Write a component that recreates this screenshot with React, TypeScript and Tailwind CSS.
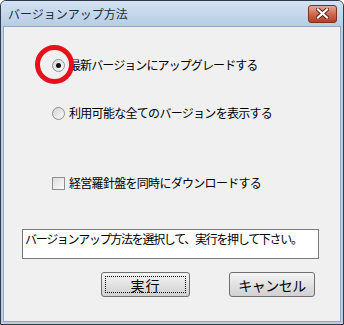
import React from 'react';

const JP = { fontFamily: "'Noto Sans CJK JP', 'Noto Sans', sans-serif" };

function Radio({ checked }: { checked?: boolean }) {
  return (
    <span className="w-[13px] h-[13px] rounded-full border border-[#8e8f8f] bg-gradient-to-br from-[#d4d4d4] to-[#fbfbfb] flex items-center justify-center shrink-0">
      {checked && <span className="w-[5px] h-[5px] rounded-full bg-[#111]" />}
    </span>
  );
}

export default function App() {
  return (
    <div
      className="w-[344px] h-[325px] flex flex-col border border-[#2f3b4a] rounded-t-[6px] bg-[#b9cfe6] overflow-hidden"
      style={JP}
    >
      {/* Title bar */}
      <div className="h-[25px] flex items-center justify-between pl-[7px] pr-[6px] bg-gradient-to-b from-[#d3e2f2] to-[#b7cde5]">
        <span className="text-[12px] leading-none text-[#1e2a3a]">
          バージョンアップ方法
        </span>
        <button className="w-[29px] h-[18px] rounded-[3px] border border-[#7a3222] bg-gradient-to-b from-[#e6a594] via-[#cf6a52] to-[#b83d22] flex items-center justify-center">
          <svg width="13" height="11" viewBox="0 0 13 11">
            <path d="M2 1.5 L11 9.5 M11 1.5 L2 9.5" stroke="#5a2015" strokeWidth="4" strokeLinecap="square" />
            <path d="M2 1.5 L11 9.5 M11 1.5 L2 9.5" stroke="#ffffff" strokeWidth="2.2" strokeLinecap="square" />
          </svg>
        </button>
      </div>

      {/* Client area */}
      <div className="flex-1 mx-[2px] mb-[2px] bg-[#f0f0f0] border border-[#94aac4] border-b-[#5fb8d6] flex flex-col text-[12px] leading-none text-black relative">
        <div className="flex flex-col pl-[48px] pt-[30px]">
          <label className="h-[16px] flex items-center gap-[4px] tracking-[-0.9px]">
            <Radio checked />
            <span>最新バージョンにアップグレードする</span>
          </label>
          <label className="h-[16px] mt-[32px] flex items-center gap-[4px] tracking-[-0.7px]">
            <Radio />
            <span>利用可能な全てのバージョンを表示する</span>
          </label>
          <label className="h-[16px] mt-[54px] flex items-center gap-[4px] tracking-[-0.7px]">
            <span className="w-[13px] h-[13px] border border-[#8e8f8f] bg-gradient-to-br from-[#dcdcdc] to-[#fdfdfd] shrink-0" />
            <span>経営羅針盤を同時にダウンロードする</span>
          </label>
        </div>

        <div className="ml-[18px] mt-[38px] w-[297px] h-[30px] bg-white border border-[#7a7a7a] pl-[2px] pt-[3px] tracking-[-1.3px]">
          バージョンアップ方法を選択して、実行を押して下さい。
        </div>

        <div className="flex mt-[13px] ml-[97px] gap-[39px]">
          <button className="w-[89px] h-[25px] rounded-[3px] border border-[#707070] bg-gradient-to-b from-[#f4f4f4] to-[#d0d0d0] p-[3px]">
            <span className="w-full h-full border border-dotted border-black flex items-center justify-center text-[14px] tracking-[1px]">
              実行
            </span>
          </button>
          <button className="w-[86px] h-[25px] rounded-[3px] border border-[#707070] bg-gradient-to-b from-[#f4f4f4] to-[#d0d0d0] flex items-center justify-center text-[14px] tracking-[-0.5px]">
            キャンセル
          </button>
        </div>

        {/* annotation ring */}
        <div className="absolute left-[31px] top-[18px] w-[39px] h-[39px] rounded-full border-[5px] border-[#e8101a]" />
      </div>
    </div>
  );
}
